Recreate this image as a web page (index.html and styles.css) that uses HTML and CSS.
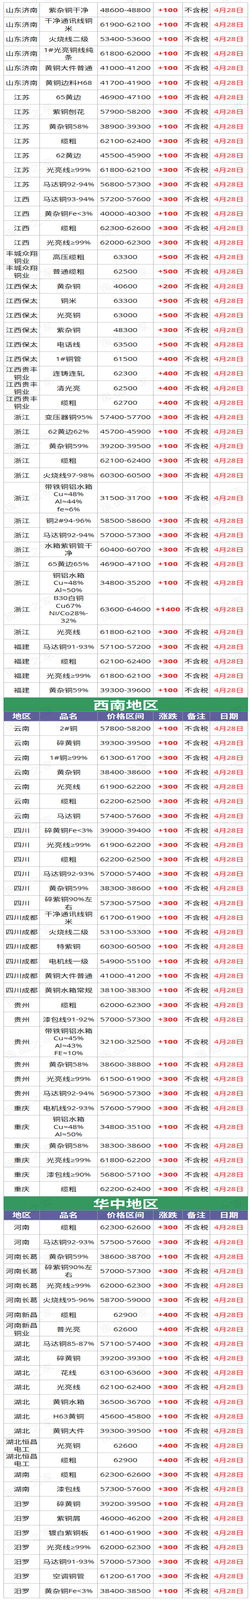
FILE: index.html
```html
<!DOCTYPE html>
<html lang="zh-CN">
<head>
<meta charset="utf-8">
<title>铜价行情</title>
<link rel="stylesheet" href="styles.css">
</head>
<body>
<div class="frame" id="frame">
<div class="page" id="page">
<div class="sheet">
<div class="row"><span class="c">山东济南</span><span class="c">紫杂铜干净</span><span class="c num">48600-48800</span><span class="c chg">+100</span><span class="c">不含税</span><span class="c date">4月28日</span></div>
<div class="row"><span class="c">山东济南</span><span class="c"><span class="ml">干净通讯线铜<br>米</span></span><span class="c num">61900-62100</span><span class="c chg">+100</span><span class="c">不含税</span><span class="c date">4月28日</span></div>
<div class="row"><span class="c">山东济南</span><span class="c">火烧线二级</span><span class="c num">53400-53600</span><span class="c chg">+100</span><span class="c">不含税</span><span class="c date">4月28日</span></div>
<div class="row"><span class="c">山东济南</span><span class="c"><span class="ml">1#光亮铜线纯<br>条</span></span><span class="c num">61800-62000</span><span class="c chg">+100</span><span class="c">不含税</span><span class="c date">4月28日</span></div>
<div class="row"><span class="c">山东济南</span><span class="c">黄铜大件普通</span><span class="c num">41000-41200</span><span class="c chg">+100</span><span class="c">不含税</span><span class="c date">4月28日</span></div>
<div class="row"><span class="c">山东济南</span><span class="c">黄铜边料H68</span><span class="c num">41700-41900</span><span class="c chg">+100</span><span class="c">不含税</span><span class="c date">4月28日</span></div>
<div class="row"><span class="c">江苏</span><span class="c">65黄边</span><span class="c num">46900-47100</span><span class="c chg">+100</span><span class="c">不含税</span><span class="c date">4月28日</span></div>
<div class="row"><span class="c">江苏</span><span class="c">紫铜刨花</span><span class="c num">57900-58200</span><span class="c chg">+300</span><span class="c">不含税</span><span class="c date">4月28日</span></div>
<div class="row"><span class="c">江苏</span><span class="c">黄杂铜58%</span><span class="c num">38900-39300</span><span class="c chg">+100</span><span class="c">不含税</span><span class="c date">4月28日</span></div>
<div class="row"><span class="c">江苏</span><span class="c">缆粗</span><span class="c num">62100-62400</span><span class="c chg">+300</span><span class="c">不含税</span><span class="c date">4月28日</span></div>
<div class="row"><span class="c">江苏</span><span class="c">62黄边</span><span class="c num">45500-45900</span><span class="c chg">+100</span><span class="c">不含税</span><span class="c date">4月28日</span></div>
<div class="row"><span class="c">江苏</span><span class="c">光亮线≥99%</span><span class="c num">61800-62100</span><span class="c chg">+300</span><span class="c">不含税</span><span class="c date">4月28日</span></div>
<div class="row"><span class="c">江苏</span><span class="c">马达铜92-94%</span><span class="c num">56800-57300</span><span class="c chg">+300</span><span class="c">不含税</span><span class="c date">4月28日</span></div>
<div class="row"><span class="c">江西</span><span class="c">马达铜93-94%</span><span class="c num">57200-57600</span><span class="c chg">+300</span><span class="c">不含税</span><span class="c date">4月28日</span></div>
<div class="row"><span class="c">江西</span><span class="c">黄杂铜Fe&lt;3%</span><span class="c num">40000-40300</span><span class="c chg">+100</span><span class="c">不含税</span><span class="c date">4月28日</span></div>
<div class="row"><span class="c">江西</span><span class="c">缆粗</span><span class="c num">62300-62600</span><span class="c chg">+300</span><span class="c">不含税</span><span class="c date">4月28日</span></div>
<div class="row"><span class="c">江西</span><span class="c">光亮线≥99%</span><span class="c num">62000-62300</span><span class="c chg">+300</span><span class="c">不含税</span><span class="c date">4月28日</span></div>
<div class="row"><span class="c"><span class="ml">丰城众翔<br>铜业</span></span><span class="c">高压缆粗</span><span class="c num">63300</span><span class="c chg">+500</span><span class="c">不含税</span><span class="c date">4月28日</span></div>
<div class="row"><span class="c"><span class="ml">丰城众翔<br>铜业</span></span><span class="c">普通缆粗</span><span class="c num">62500</span><span class="c chg">+500</span><span class="c">不含税</span><span class="c date">4月28日</span></div>
<div class="row"><span class="c">江西保太</span><span class="c">黄杂铜</span><span class="c num">40600</span><span class="c chg">+200</span><span class="c">不含税</span><span class="c date">4月28日</span></div>
<div class="row"><span class="c">江西保太</span><span class="c">铜米</span><span class="c num">63300</span><span class="c chg">+500</span><span class="c">不含税</span><span class="c date">4月28日</span></div>
<div class="row"><span class="c">江西保太</span><span class="c">光亮铜</span><span class="c num">63000</span><span class="c chg">+500</span><span class="c">不含税</span><span class="c date">4月28日</span></div>
<div class="row"><span class="c">江西保太</span><span class="c">紫杂铜</span><span class="c num">48300</span><span class="c chg">+300</span><span class="c">不含税</span><span class="c date">4月28日</span></div>
<div class="row"><span class="c">江西保太</span><span class="c">电话线</span><span class="c num">63500</span><span class="c chg">+500</span><span class="c">不含税</span><span class="c date">4月28日</span></div>
<div class="row"><span class="c">江西保太</span><span class="c">1#铜管</span><span class="c num">61500</span><span class="c chg">+400</span><span class="c">不含税</span><span class="c date">4月28日</span></div>
<div class="row"><span class="c"><span class="ml">江西贵丰<br>铜业</span></span><span class="c">连铸连轧</span><span class="c num">62300</span><span class="c chg">+400</span><span class="c">不含税</span><span class="c date">4月28日</span></div>
<div class="row"><span class="c"><span class="ml">江西贵丰<br>铜业</span></span><span class="c">清光亮</span><span class="c num">62500</span><span class="c chg">+400</span><span class="c">不含税</span><span class="c date">4月28日</span></div>
<div class="row"><span class="c"><span class="ml">江西贵丰<br>铜业</span></span><span class="c">缆粗</span><span class="c num">62700</span><span class="c chg">+400</span><span class="c">不含税</span><span class="c date">4月28日</span></div>
<div class="row"><span class="c">浙江</span><span class="c">变压器铜95%</span><span class="c num">57400-57700</span><span class="c chg">+300</span><span class="c">不含税</span><span class="c date">4月28日</span></div>
<div class="row"><span class="c">浙江</span><span class="c">62黄边62%</span><span class="c num">45700-45900</span><span class="c chg">+100</span><span class="c">不含税</span><span class="c date">4月28日</span></div>
<div class="row"><span class="c">浙江</span><span class="c">黄杂铜59%</span><span class="c num">39200-39500</span><span class="c chg">+100</span><span class="c">不含税</span><span class="c date">4月28日</span></div>
<div class="row"><span class="c">浙江</span><span class="c">缆粗</span><span class="c num">62100-62400</span><span class="c chg">+300</span><span class="c">不含税</span><span class="c date">4月28日</span></div>
<div class="row"><span class="c">浙江</span><span class="c">火烧线97-98%</span><span class="c num">60300-60500</span><span class="c chg">+300</span><span class="c">不含税</span><span class="c date">4月28日</span></div>
<div class="row r4"><span class="c">浙江</span><span class="c"><span class="ml">带铁铜铝水箱<br>Cu≈48%<br>Al≈44%<br>fe≈6%</span></span><span class="c num">31500-31700</span><span class="c chg">+100</span><span class="c">不含税</span><span class="c date">4月28日</span></div>
<div class="row"><span class="c">浙江</span><span class="c">铜2#94-96%</span><span class="c num">58500-58600</span><span class="c chg">+300</span><span class="c">不含税</span><span class="c date">4月28日</span></div>
<div class="row"><span class="c">浙江</span><span class="c">马达铜92-94%</span><span class="c num">57000-57300</span><span class="c chg">+300</span><span class="c">不含税</span><span class="c date">4月28日</span></div>
<div class="row"><span class="c">浙江</span><span class="c"><span class="ml">水箱紫铜管干<br>净</span></span><span class="c num">60400-60700</span><span class="c chg">+300</span><span class="c">不含税</span><span class="c date">4月28日</span></div>
<div class="row"><span class="c">浙江</span><span class="c">65黄边65%</span><span class="c num">46900-47100</span><span class="c chg">+100</span><span class="c">不含税</span><span class="c date">4月28日</span></div>
<div class="row r3"><span class="c">浙江</span><span class="c"><span class="ml">铜铝水箱<br>Cu≈48%<br>Al≈50%</span></span><span class="c num">34800-35200</span><span class="c chg">+100</span><span class="c">不含税</span><span class="c date">4月28日</span></div>
<div class="row r4"><span class="c">浙江</span><span class="c"><span class="ml">B30白铜<br>Cu67%<br>Ni/Co28%-<br>32%</span></span><span class="c num">63600-64600</span><span class="c chg">+1400</span><span class="c">不含税</span><span class="c date">4月28日</span></div>
<div class="row"><span class="c">浙江</span><span class="c">光亮线</span><span class="c num">61800-62100</span><span class="c chg">+300</span><span class="c">不含税</span><span class="c date">4月28日</span></div>
<div class="row"><span class="c">福建</span><span class="c">马达铜91-93%</span><span class="c num">57100-57200</span><span class="c chg">+300</span><span class="c">不含税</span><span class="c date">4月28日</span></div>
<div class="row"><span class="c">福建</span><span class="c">缆粗</span><span class="c num">62100-62400</span><span class="c chg">+300</span><span class="c">不含税</span><span class="c date">4月28日</span></div>
<div class="row"><span class="c">福建</span><span class="c">光亮线≥99%</span><span class="c num">61800-62100</span><span class="c chg">+300</span><span class="c">不含税</span><span class="c date">4月28日</span></div>
<div class="row"><span class="c">福建</span><span class="c">黄杂铜59%</span><span class="c num">39300-39600</span><span class="c chg">+100</span><span class="c">不含税</span><span class="c date">4月28日</span></div>

<div class="band">西南地区</div>
<div class="row head"><span class="c">地区</span><span class="c">品名</span><span class="c">价格区间</span><span class="c">涨跌</span><span class="c">备注</span><span class="c">日期</span></div>
<div class="row"><span class="c">云南</span><span class="c">2#铜</span><span class="c num">57800-58200</span><span class="c chg">+100</span><span class="c">不含税</span><span class="c date">4月28日</span></div>
<div class="row"><span class="c">云南</span><span class="c">碎黄铜</span><span class="c num">39300-39500</span><span class="c chg">+100</span><span class="c">不含税</span><span class="c date">4月28日</span></div>
<div class="row"><span class="c">云南</span><span class="c">1#铜≥99%</span><span class="c num">61300-61700</span><span class="c chg">+300</span><span class="c">不含税</span><span class="c date">4月28日</span></div>
<div class="row"><span class="c">云南</span><span class="c">黄杂铜</span><span class="c num">38400-38600</span><span class="c chg">+100</span><span class="c">不含税</span><span class="c date">4月28日</span></div>
<div class="row"><span class="c">云南</span><span class="c">光亮线</span><span class="c num">61900-62200</span><span class="c chg">+300</span><span class="c">不含税</span><span class="c date">4月28日</span></div>
<div class="row"><span class="c">云南</span><span class="c">缆粗</span><span class="c num">62200-62500</span><span class="c chg">+300</span><span class="c">不含税</span><span class="c date">4月28日</span></div>
<div class="row"><span class="c">云南</span><span class="c">马达铜</span><span class="c num">57400-57600</span><span class="c chg">+300</span><span class="c">不含税</span><span class="c date">4月28日</span></div>
<div class="row"><span class="c">四川</span><span class="c">碎黄铜Fe&lt;3%</span><span class="c num">39000-39400</span><span class="c chg">+100</span><span class="c">不含税</span><span class="c date">4月28日</span></div>
<div class="row"><span class="c">四川</span><span class="c">光亮线≥99%</span><span class="c num">61900-62200</span><span class="c chg">+300</span><span class="c">不含税</span><span class="c date">4月28日</span></div>
<div class="row"><span class="c">四川</span><span class="c">缆粗</span><span class="c num">62200-62500</span><span class="c chg">+300</span><span class="c">不含税</span><span class="c date">4月28日</span></div>
<div class="row"><span class="c">四川</span><span class="c">马达铜92-93%</span><span class="c num">57000-57400</span><span class="c chg">+300</span><span class="c">不含税</span><span class="c date">4月28日</span></div>
<div class="row"><span class="c">四川</span><span class="c">黄杂铜59%</span><span class="c num">38300-38600</span><span class="c chg">+100</span><span class="c">不含税</span><span class="c date">4月28日</span></div>
<div class="row"><span class="c">四川</span><span class="c"><span class="ml">碎紫铜90%左<br>右</span></span><span class="c num">57300-57500</span><span class="c chg">+300</span><span class="c">不含税</span><span class="c date">4月28日</span></div>
<div class="row"><span class="c">四川成都</span><span class="c"><span class="ml">干净通讯线铜<br>米</span></span><span class="c num">61700-61900</span><span class="c chg">+100</span><span class="c">不含税</span><span class="c date">4月28日</span></div>
<div class="row"><span class="c">四川成都</span><span class="c">火烧线二级</span><span class="c num">53100-53300</span><span class="c chg">+100</span><span class="c">不含税</span><span class="c date">4月28日</span></div>
<div class="row"><span class="c">四川成都</span><span class="c">特紫铜</span><span class="c num">60300-60500</span><span class="c chg">+100</span><span class="c">不含税</span><span class="c date">4月28日</span></div>
<div class="row"><span class="c">四川成都</span><span class="c">电机线一级</span><span class="c num">54900-55100</span><span class="c chg">+100</span><span class="c">不含税</span><span class="c date">4月28日</span></div>
<div class="row"><span class="c">四川成都</span><span class="c">黄铜大件普通</span><span class="c num">41000-41200</span><span class="c chg">+100</span><span class="c">不含税</span><span class="c date">4月28日</span></div>
<div class="row"><span class="c">四川成都</span><span class="c">黄铜水箱常规</span><span class="c num">38100-38300</span><span class="c chg">+100</span><span class="c">不含税</span><span class="c date">4月28日</span></div>
<div class="row"><span class="c">贵州</span><span class="c">缆粗</span><span class="c num">62000-62300</span><span class="c chg">+300</span><span class="c">不含税</span><span class="c date">4月28日</span></div>
<div class="row"><span class="c">贵州</span><span class="c">漆包线91-92%</span><span class="c num">57000-57300</span><span class="c chg">+300</span><span class="c">不含税</span><span class="c date">4月28日</span></div>
<div class="row r4"><span class="c">贵州</span><span class="c"><span class="ml">带铁铜铝水箱<br>Cu≈45%<br>Al≈43%<br>FE≈10%</span></span><span class="c num">32100-32500</span><span class="c chg">+100</span><span class="c">不含税</span><span class="c date">4月28日</span></div>
<div class="row"><span class="c">贵州</span><span class="c">黄杂铜58%</span><span class="c num">38600-38800</span><span class="c chg">+100</span><span class="c">不含税</span><span class="c date">4月28日</span></div>
<div class="row"><span class="c">贵州</span><span class="c">光亮线≥99%</span><span class="c num">61500-61900</span><span class="c chg">+300</span><span class="c">不含税</span><span class="c date">4月28日</span></div>
<div class="row"><span class="c">贵州</span><span class="c">马达铜92-94%</span><span class="c num">56900-57300</span><span class="c chg">+300</span><span class="c">不含税</span><span class="c date">4月28日</span></div>
<div class="row"><span class="c">重庆</span><span class="c">电机线92-93%</span><span class="c num">57600-57900</span><span class="c chg">+300</span><span class="c">不含税</span><span class="c date">4月28日</span></div>
<div class="row r3"><span class="c">重庆</span><span class="c"><span class="ml">铜铝水箱<br>Cu≈48%<br>Al≈50%</span></span><span class="c num">34800-35100</span><span class="c chg">+100</span><span class="c">不含税</span><span class="c date">4月28日</span></div>
<div class="row"><span class="c">重庆</span><span class="c">黄杂铜58%</span><span class="c num">38300-38600</span><span class="c chg">+100</span><span class="c">不含税</span><span class="c date">4月28日</span></div>
<div class="row"><span class="c">重庆</span><span class="c">光亮线≥99%</span><span class="c num">61800-62200</span><span class="c chg">+300</span><span class="c">不含税</span><span class="c date">4月28日</span></div>
<div class="row"><span class="c">重庆</span><span class="c">漆包线≥90%</span><span class="c num">56800-57100</span><span class="c chg">+300</span><span class="c">不含税</span><span class="c date">4月28日</span></div>
<div class="row"><span class="c">重庆</span><span class="c">缆粗</span><span class="c num">62200-62400</span><span class="c chg">+300</span><span class="c">不含税</span><span class="c date">4月28日</span></div>

<div class="band">华中地区</div>
<div class="row head"><span class="c">地区</span><span class="c">品名</span><span class="c">价格区间</span><span class="c">涨跌</span><span class="c">备注</span><span class="c">日期</span></div>
<div class="row"><span class="c">河南</span><span class="c">缆粗</span><span class="c num">62300-62600</span><span class="c chg">+300</span><span class="c">不含税</span><span class="c date">4月28日</span></div>
<div class="row"><span class="c">河南</span><span class="c">马达铜92-93%</span><span class="c num">57500-57600</span><span class="c chg">+300</span><span class="c">不含税</span><span class="c date">4月28日</span></div>
<div class="row"><span class="c">河南长葛</span><span class="c">黄杂铜59%</span><span class="c num">38600-38700</span><span class="c chg">+100</span><span class="c">不含税</span><span class="c date">4月28日</span></div>
<div class="row"><span class="c">河南长葛</span><span class="c"><span class="ml">碎紫铜90%左<br>右</span></span><span class="c num">57000-57300</span><span class="c chg">+300</span><span class="c">不含税</span><span class="c date">4月28日</span></div>
<div class="row"><span class="c">河南长葛</span><span class="c">光亮线≥99%</span><span class="c num">62000-62300</span><span class="c chg">+300</span><span class="c">不含税</span><span class="c date">4月28日</span></div>
<div class="row"><span class="c">河南长葛</span><span class="c">火烧线95-96%</span><span class="c num">58700-59000</span><span class="c chg">+300</span><span class="c">不含税</span><span class="c date">4月28日</span></div>
<div class="row"><span class="c">河南新昌</span><span class="c">缆粗</span><span class="c num">62900</span><span class="c chg">+400</span><span class="c">不含税</span><span class="c date">4月28日</span></div>
<div class="row"><span class="c"><span class="ml">河南新昌<br>铜业</span></span><span class="c">普光亮</span><span class="c num">62600</span><span class="c chg">+400</span><span class="c">不含税</span><span class="c date">4月28日</span></div>
<div class="row"><span class="c">湖北</span><span class="c">马达铜85-87%</span><span class="c num">57100-57400</span><span class="c chg">+300</span><span class="c">不含税</span><span class="c date">4月28日</span></div>
<div class="row"><span class="c">湖北</span><span class="c">碎黄铜</span><span class="c num">39200-39300</span><span class="c chg">+100</span><span class="c">不含税</span><span class="c date">4月28日</span></div>
<div class="row"><span class="c">湖北</span><span class="c">花线</span><span class="c num">63100-63600</span><span class="c chg">+300</span><span class="c">不含税</span><span class="c date">4月28日</span></div>
<div class="row"><span class="c">湖北</span><span class="c">光亮线</span><span class="c num">62100-62400</span><span class="c chg">+300</span><span class="c">不含税</span><span class="c date">4月28日</span></div>
<div class="row"><span class="c">湖北</span><span class="c">黄铜水箱</span><span class="c num">36500-36700</span><span class="c chg">+100</span><span class="c">不含税</span><span class="c date">4月28日</span></div>
<div class="row"><span class="c">湖北</span><span class="c">H63黄铜</span><span class="c num">45600-45800</span><span class="c chg">+100</span><span class="c">不含税</span><span class="c date">4月28日</span></div>
<div class="row"><span class="c">湖北</span><span class="c">黄铜大件</span><span class="c num">39300-39500</span><span class="c chg">+100</span><span class="c">不含税</span><span class="c date">4月28日</span></div>
<div class="row"><span class="c"><span class="ml">湖北恒昌<br>电工</span></span><span class="c">光亮铜</span><span class="c num">62600</span><span class="c chg">+400</span><span class="c">不含税</span><span class="c date">4月28日</span></div>
<div class="row"><span class="c"><span class="ml">湖北恒昌<br>电工</span></span><span class="c">缆粗</span><span class="c num">62900</span><span class="c chg">+400</span><span class="c">不含税</span><span class="c date">4月28日</span></div>
<div class="row"><span class="c">湖南</span><span class="c">缆粗</span><span class="c num">62300-62600</span><span class="c chg">+300</span><span class="c">不含税</span><span class="c date">4月28日</span></div>
<div class="row"><span class="c">湖南</span><span class="c">漆包线</span><span class="c num">57300-57600</span><span class="c chg">+300</span><span class="c">不含税</span><span class="c date">4月28日</span></div>
<div class="row"><span class="c">汨罗</span><span class="c">碎黄铜</span><span class="c num">39200-39500</span><span class="c chg">+100</span><span class="c">不含税</span><span class="c date">4月28日</span></div>
<div class="row"><span class="c">汨罗</span><span class="c">紫铜屑</span><span class="c num">46000-46200</span><span class="c chg">+200</span><span class="c">不含税</span><span class="c date">4月28日</span></div>
<div class="row"><span class="c">汨罗</span><span class="c">镀白紫铜板</span><span class="c num">61400-61900</span><span class="c chg">+300</span><span class="c">不含税</span><span class="c date">4月28日</span></div>
<div class="row"><span class="c">汨罗</span><span class="c">光亮线≥99%</span><span class="c num">62000-62300</span><span class="c chg">+300</span><span class="c">不含税</span><span class="c date">4月28日</span></div>
<div class="row"><span class="c">汨罗</span><span class="c">马达铜91-93%</span><span class="c num">57000-57300</span><span class="c chg">+300</span><span class="c">不含税</span><span class="c date">4月28日</span></div>
<div class="row"><span class="c">汨罗</span><span class="c">空调铜管</span><span class="c num">61200-61700</span><span class="c chg">+300</span><span class="c">不含税</span><span class="c date">4月28日</span></div>
<div class="row"><span class="c">汨罗</span><span class="c">黄杂铜Fe&lt;3%</span><span class="c num">38400-38500</span><span class="c chg">+100</span><span class="c">不含税</span><span class="c date">4月28日</span></div>
</div>

<div class="wm" aria-hidden="true">
<i>废品之家</i><i>废品之家</i><i>废品之家</i>
<i>废品之家</i><i>废品之家</i><i>废品之家</i>
<i>废品之家</i><i>废品之家</i><i>废品之家</i>
<i>废品之家</i><i>废品之家</i><i>废品之家</i>
<i>废品之家</i><i>废品之家</i><i>废品之家</i>
<i>废品之家</i><i>废品之家</i><i>废品之家</i>
<i>废品之家</i><i>废品之家</i><i>废品之家</i>
<i>废品之家</i><i>废品之家</i><i>废品之家</i>
<i>废品之家</i><i>废品之家</i><i>废品之家</i>
<i>废品之家</i><i>废品之家</i><i>废品之家</i>
<i>废品之家</i><i>废品之家</i><i>废品之家</i>
<i>废品之家</i><i>废品之家</i><i>废品之家</i>
<i>废品之家</i><i>废品之家</i><i>废品之家</i>
<i>废品之家</i><i>废品之家</i><i>废品之家</i>
<i>废品之家</i><i>废品之家</i><i>废品之家</i>
<i>废品之家</i><i>废品之家</i><i>废品之家</i>
<i>废品之家</i><i>废品之家</i><i>废品之家</i>
<i>废品之家</i><i>废品之家</i><i>废品之家</i>
<i>废品之家</i><i>废品之家</i><i>废品之家</i>
<i>废品之家</i><i>废品之家</i><i>废品之家</i>
<i>废品之家</i><i>废品之家</i><i>废品之家</i>
<i>废品之家</i><i>废品之家</i><i>废品之家</i>
<i>废品之家</i><i>废品之家</i><i>废品之家</i>
<i>废品之家</i><i>废品之家</i><i>废品之家</i>
<i>废品之家</i><i>废品之家</i><i>废品之家</i>
<i>废品之家</i><i>废品之家</i><i>废品之家</i>
<i>废品之家</i><i>废品之家</i><i>废品之家</i>
<i>废品之家</i><i>废品之家</i><i>废品之家</i>
<i>废品之家</i><i>废品之家</i><i>废品之家</i>
</div>
</div>
</div>
<script src="script.js"></script>
</body>
</html>
```

FILE: styles.css
```css
* {
  box-sizing: border-box;
}

html,
body {
  margin: 0;
  padding: 0;
  background: #ffffff;
}

body {
  font-family: "Open Sans", "Noto Sans CJK SC", sans-serif;
  color: #1c1c1c;
}

/* The frame keeps the sheet's full 5959px design height; if the window
   is shorter, script.js sets --sy so that the whole sheet stays visible. */
.frame {
  --sy: 1;
  position: relative;
  overflow: hidden;
  width: 640px;
  height: calc(5959px * var(--sy));
}

.page {
  position: relative;
  overflow: hidden;
  width: 640px;
  height: 5959px;
  padding: 9px 0 0 9px;
  transform: scaleY(var(--sy));
  transform-origin: 0 0;
}

.sheet {
  width: 626px;
  border-left: 1px solid #a2a2a2;
  border-top: 1px solid #a2a2a2;
}

.row {
  display: grid;
  grid-template-columns: 92px 148px 143px 75px 70px 97px;
  height: 54.17px;
}

.row.r3 {
  height: 85px;
}

.row.r4 {
  height: 114px;
}

.c {
  display: flex;
  align-items: center;
  justify-content: center;
  text-align: center;
  border-right: 1px solid #a2a2a2;
  border-bottom: 1px solid #a2a2a2;
  font-size: 20.5px;
  line-height: 28px;
  white-space: nowrap;
  overflow: hidden;
}

.ml {
  display: block;
  text-align: center;
}

.c.num {
  font-size: 21.5px;
}

.c.chg {
  color: #ec1c1c;
  font-weight: 700;
  font-size: 21.5px;
  letter-spacing: 0.4px;
}

.c.date {
  color: #ec1c1c;
}

.band {
  height: 52px;
  margin-left: -1px;
  background: #35985f;
  color: #ffffff;
  display: flex;
  align-items: center;
  justify-content: center;
  font-family: "Noto Sans CJK SC", sans-serif;
  font-weight: 700;
  font-size: 42px;
}

.row.head {
  height: 36.5px;
  background: #5f609c;
}

.row.head .c {
  color: #ffffff;
  font-family: "Noto Sans CJK SC", sans-serif;
  font-weight: 700;
  font-size: 24px;
  line-height: 30px;
}

.wm {
  position: absolute;
  top: -82px;
  left: -48px;
  width: 732px;
  display: grid;
  grid-template-columns: repeat(3, 244px);
  grid-auto-rows: 204px;
  pointer-events: none;
}

.wm i {
  display: flex;
  align-items: center;
  justify-content: center;
  font-style: normal;
  font-family: "Noto Sans CJK SC", sans-serif;
  font-size: 34px;
  letter-spacing: 2px;
  color: rgba(0, 0, 0, 0.06);
  transform: rotate(-31deg);
  white-space: nowrap;
}
```

FILE: script.js
```js
(function () {
  var DESIGN_HEIGHT = 5959;
  var frame = document.getElementById('frame');
  function fit() {
    var h = window.innerHeight || DESIGN_HEIGHT;
    var sy = h < DESIGN_HEIGHT ? h / DESIGN_HEIGHT : 1;
    frame.style.setProperty('--sy', String(sy));
  }
  fit();
  window.addEventListener('resize', fit);
})();
```
